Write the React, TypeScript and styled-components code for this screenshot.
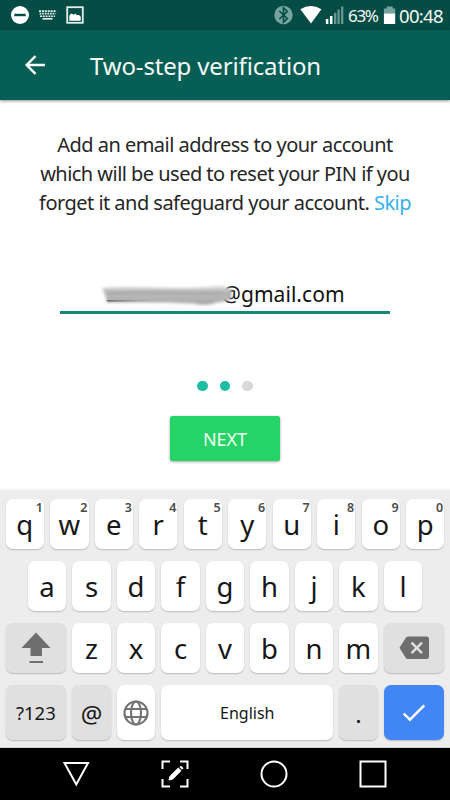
import React from "react";
import styled, { createGlobalStyle } from "styled-components";

const GlobalStyle = createGlobalStyle`
  * { box-sizing: border-box; }
  body { margin: 0; background: #fff; }
`;

const Screen = styled.div`
  width: 450px;
  height: 800px;
  display: flex;
  flex-direction: column;
  overflow: hidden;
  background: #fff;
  color: #262626;
  font-family: "Noto Sans", "Open Sans", sans-serif;
`;

const StatusBar = styled.div`
  height: 30px;
  flex: none;
  display: flex;
  justify-content: space-between;
  background: #054d44;
  color: #f3f8f7;
`;

const StatusIcons = styled.svg`
  display: block;
  flex: none;
`;

const StatusRight = styled.div`
  display: flex;
  line-height: 31px;
`;

const StatusText = styled.span<{ $size: number; $width: number; $spacing: number }>`
  width: ${(p) => p.$width}px;
  font-size: ${(p) => p.$size}px;
  letter-spacing: ${(p) => p.$spacing}px;
  white-space: nowrap;
`;

const AppBar = styled.header`
  height: 70px;
  flex: none;
  display: flex;
  align-items: center;
  padding-left: 24px;
  gap: 44px;
  background: #075e54;
  box-shadow: 0 1px 3px rgba(0, 0, 0, 0.45);
`;

const Title = styled.h1`
  margin: 2px 0 0;
  color: #f5f9f8;
  font-size: 24px;
  font-weight: 400;
  line-height: 34px;
  letter-spacing: -0.15px;
  white-space: nowrap;
`;

const Content = styled.main`
  height: 390px;
  flex: none;
  display: flex;
  flex-direction: column;
  align-items: center;
  padding-top: 30px;
`;

const Message = styled.p`
  margin: 0;
  text-align: center;
  font-size: 20px;
  line-height: 29px;
  letter-spacing: -0.53px;
`;

const Line = styled.span`
  display: block;
  white-space: nowrap;
`;

const SkipLink = styled.a`
  color: #34b0ee;
`;

const EmailField = styled.div`
  width: 330px;
  height: 37px;
  margin-top: 59.5px;
  display: flex;
  border-bottom: 3px solid #12897b;
  color: #111;
  font-size: 21px;
  line-height: 34px;
`;

const Smudge = styled.svg`
  flex: none;
  margin-right: -13px;
  z-index: 1;
`;

const Domain = styled.span`
  letter-spacing: 0.05px;
`;

const Dots = styled.div`
  display: flex;
  gap: 12px;
  margin-top: 67px;
`;

const Dot = styled.i<{ $active?: boolean }>`
  width: 10.5px;
  height: 10.5px;
  border-radius: 50%;
  background: ${(p) => (p.$active ? "#1ebea5" : "#d8d8d8")};
`;

const NextButton = styled.button`
  width: 110px;
  height: 45px;
  margin-top: 25px;
  padding: 0;
  border: 0;
  border-radius: 2.5px;
  background: #26d367;
  box-shadow: 0 1px 3px rgba(0, 0, 0, 0.35);
  color: #effff3;
  font: 400 18px/46px "Noto Sans", sans-serif;
  letter-spacing: 0;
`;

const Keyboard = styled.section`
  height: 258px;
  flex: none;
  display: flex;
  flex-direction: column;
  align-items: center;
  gap: 12.5px;
  padding-top: 9px;
  background: #ededed;
  box-shadow: 0 -1px 2px rgba(0, 0, 0, 0.06);
  border-bottom: 1px solid #d2d6d5;
`;

const KeyRow = styled.div`
  display: flex;
  gap: 6.1px;
`;

const Key = styled.div<{ $w?: number; $h?: number; $tone?: "gray" | "blue"; $size?: number; $drop?: number }>`
  position: relative;
  display: flex;
  align-items: center;
  justify-content: center;
  width: ${(p) => p.$w ?? 38.4}px;
  height: ${(p) => p.$h ?? 49.5}px;
  padding-top: ${(p) => p.$drop ?? 0}px;
  border-radius: 7px;
  background: ${(p) => (p.$tone === "gray" ? "#e0e0e0" : p.$tone === "blue" ? "#4285f4" : "#fff")};
  box-shadow: 0 1px 1.5px rgba(0, 0, 0, 0.22);
  color: #171717;
  font-size: ${(p) => p.$size ?? 27.5}px;
  line-height: 1;
`;

const Hint = styled.sup`
  position: absolute;
  top: 2px;
  right: 1.2px;
  color: #4a4a4a;
  font-size: 12.5px;
  font-weight: 600;
  line-height: 14px;
`;

const NavBar = styled.nav`
  height: 52px;
  flex: none;
  display: flex;
  align-items: center;
  padding-left: 61px;
  gap: 69px;
  background: #000;
`;

const NavIcon = styled.svg`
  flex: none;
  fill: none;
  stroke: #fff;
  stroke-width: 2;
`;

const topRow = "qwertyuiop".split("");
const homeRow = "asdfghjkl".split("");
const bottomRow = "zxcvbnm".split("");

export default function App() {
  return (
    <>
      <GlobalStyle />
      <Screen>
        <StatusBar>
          <StatusIcons width="90" height="30" viewBox="0 0 90 30">
            <circle cx="20" cy="15" r="9" fill="#fff" />
            <path d="M14.3 15h11.4" stroke="#054d44" strokeWidth="2.4" />
            <g stroke="#e3eceb" fill="none">
              <path d="M39 11.2h17.5" strokeWidth="1.8" strokeDasharray="2.1 .8" />
              <path d="M39.6 13.7h16" strokeWidth="1.8" strokeDasharray="1.7 .9" />
              <path d="M40 16.2h15" strokeWidth="1.6" strokeDasharray="2 .8" />
              <path d="M42.5 18.8h10" strokeWidth="1.7" />
              <rect x="67.2" y="7.2" width="15.6" height="15.6" strokeWidth="1.8" />
            </g>
            <path d="M69.3 20.7v-4.8c1.3-3 3.1-2.5 4.1-.9 1.6-2 2.5-1.1 3.5.3 1.4-.7 2.6-.3 3.8 1.4v4z" fill="#fff" />
          </StatusIcons>
          <StatusRight>
            <StatusIcons width="75" height="30" viewBox="273 0 75 30">
              <circle cx="283.5" cy="15" r="9.2" fill="#76a39e" />
              <path d="M279.3 11l8 7.5-3.8 3.7V7.8l3.8 3.7-8 7.5" fill="none" stroke="#054d44" strokeWidth="1.6" />
              <path d="M300.3 9.3Q311 2.8 321.4 9.3L311 23.5z" fill="#fff" />
              <path d="M327.1 19v5M331.2 16v8" stroke="#fff" strokeWidth="2.5" />
              <path d="M335.2 12.8V24M338.6 9.5V24M342.2 6.5V24" stroke="#68958f" strokeWidth="2.3" />
            </StatusIcons>
            <StatusText $size={17} $width={35} $spacing={-1.3}>63%</StatusText>
            <StatusIcons width="16" height="30" viewBox="383 0 16 30">
              <path d="M386.7 6.5h6v2h2.5v5.3h-11.3V8.5h2.8z" fill="#76a39e" />
              <path d="M383.9 13.5h11.3V24h-11.3z" fill="#fff" />
            </StatusIcons>
            <StatusText $size={18.5} $width={51} $spacing={-0.7}>00:48</StatusText>
          </StatusRight>
        </StatusBar>

        <AppBar>
          <svg width="22" height="20" viewBox="0 0 22 20">
            <path d="M20.9 10H3M11.5 1.2L2.7 10l8.8 8.8" fill="none" stroke="#fff" strokeWidth="2.4" />
          </svg>
          <Title>Two-step verification</Title>
        </AppBar>

        <Content>
          <Message>
            <Line>Add an email address to your account</Line>
            <Line>which will be used to reset your PIN if you</Line>
            <Line>
              forget it and safeguard your account. <SkipLink>Skip</SkipLink>
            </Line>
          </Message>
          <EmailField>
            <Smudge width="175" height="34" viewBox="60 277 175 34">
              <defs>
                <filter id="soft" x="-10%" y="-50%" width="120%" height="200%">
                  <feGaussianBlur stdDeviation="1.8" />
                </filter>
                <linearGradient id="ink" x2="0" y2="1">
                  <stop stopColor="#e9e9e9" />
                  <stop offset=".35" stopColor="#b2b2b2" />
                  <stop offset=".6" stopColor="#b8b8b8" />
                  <stop offset="1" stopColor="#a0a0a0" />
                </linearGradient>
                <linearGradient id="trail">
                  <stop stopColor="#555" />
                  <stop offset="1" stopColor="#999" stopOpacity="0" />
                </linearGradient>
              </defs>
              <g filter="url(#soft)">
                <path d="M102 288q20-2 58-.5t60-2q9 2 12 4l-1 10q-5 2-14 3-10 4-23 1-37-2-87-1-1-7-5-14.500z" fill="url(#ink)" />
                <path d="M108 293.500q46-3 114 0" fill="none" stroke="#a0a0a0" strokeWidth="1.5" />
              </g>
              <path d="M106.500 300.300h55v1.200h-54z" fill="url(#trail)" />
            </Smudge>
            <Domain>@gmail.com</Domain>
          </EmailField>
          <Dots>
            <Dot $active />
            <Dot $active />
            <Dot />
          </Dots>
          <NextButton>NEXT</NextButton>
        </Content>

        <Keyboard>
          <KeyRow>
            {topRow.map((l, i) => (
              <Key key={l} $drop={2}>
                {l}
                <Hint>{(i + 1) % 10}</Hint>
              </Key>
            ))}
          </KeyRow>
          <KeyRow>
            {homeRow.map((l) => (
              <Key key={l} $drop={2}>{l}</Key>
            ))}
          </KeyRow>
          <KeyRow>
            <Key $w={60.7} $tone="gray">
              <svg width="30" height="34" viewBox="0 0 30 34">
                <path d="M15 1.5L29.500 17H21v8H9.500v-8H.5zM8.500 30H22v2H8.500z" fill="#6e6e6e" />
              </svg>
            </Key>
            {bottomRow.map((l) => (
              <Key key={l} $drop={2}>{l}</Key>
            ))}
            <Key $w={60.7} $tone="gray">
              <svg width="31" height="24" viewBox="0 0 31 24">
                <path d="M9 .5h18.500q2.500 0 2.500 2.500v17.500q0 2.500-2.500 2.500H9q-1.500 0-2.500-1.500L.5 11.800l6-9.500Q7.500.5 9 .5z" fill="#6e6e6e" />
                <path d="M12.500 6.700l10.500 10.500M23 6.700L12.500 17.200" stroke="#e0e0e0" strokeWidth="2.4" />
              </svg>
            </Key>
          </KeyRow>
          <KeyRow>
            <Key $w={60.7} $h={55} $tone="gray" $size={18.5} $drop={1}>?123</Key>
            <Key $h={55} $tone="gray" $size={24} $drop={2}>@</Key>
            <Key $h={55}>
              <svg width="26" height="26" viewBox="0 0 26 26" fill="none" stroke="#727272" strokeWidth="2.1">
                <circle cx="13" cy="13" r="11.5" />
                <ellipse cx="13" cy="13" rx="5" ry="11.5" />
                <path d="M2 9h22M2 17h22" />
              </svg>
            </Key>
            <Key $w={171.9} $h={55} $size={16} $drop={1}>English</Key>
            <Key $h={55} $tone="gray" $size={24} $drop={2}>.</Key>
            <Key $w={60.7} $h={55} $tone="blue">
              <svg width="24" height="18" viewBox="0 0 24 18">
                <path d="M1.700 9.500l6.200 6.200L22.300 1.300" fill="none" stroke="#fff" strokeWidth="2.4" />
              </svg>
            </Key>
          </KeyRow>
        </Keyboard>

        <NavBar>
          <NavIcon width="30" height="30" viewBox="0 0 30 30">
            <path d="M3.5 4H27L15.250 25.500z" />
          </NavIcon>
          <NavIcon width="30" height="30" viewBox="0 0 30 30">
            <path d="M2.500 10V2.500H10M20 2.500h7.500V10M27.500 20v7.500H20M10 27.500H2.500V20" />
            <path d="M9 21l.8-3.500 8.500-8.500 2.700 2.700-8.500 8.500zM20 8.200l1-1 2 2-1 1z" fill="#fff" strokeWidth="1" />
          </NavIcon>
          <NavIcon width="30" height="30" viewBox="0 0 30 30">
            <circle cx="15" cy="15" r="12.5" />
          </NavIcon>
          <NavIcon width="30" height="30" viewBox="0 0 30 30">
            <rect x="2.5" y="2.5" width="25" height="25" />
          </NavIcon>
        </NavBar>
      </Screen>
    </>
  );
}
